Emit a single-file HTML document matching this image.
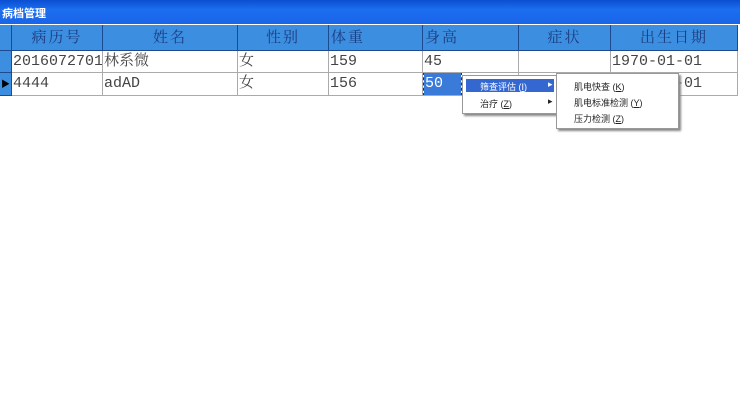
<!DOCTYPE html>
<html><head><style>
body{margin:0;width:740px;height:410px;background:#fff;position:relative;overflow:hidden;font-family:"Liberation Sans","Noto Sans CJK SC",sans-serif}
.t{position:absolute;left:0;top:0;width:740px;height:24px;background:linear-gradient(#0a4fd0,#1c6ef0 40%,#1a64e8);}
.t span{position:absolute;left:2px;top:5px;color:#fff;font-size:11px;font-weight:bold}
.c{position:absolute;box-sizing:border-box;font-size:15px;line-height:22px;white-space:nowrap;overflow:hidden;font-family:"Liberation Mono","Noto Serif CJK SC",monospace}
.h{background:#3b8ee0;color:#1d3c80;border-right:1px solid #1e4a90;border-bottom:1px solid #1e4a90;text-align:center;letter-spacing:2px;font-family:"Liberation Sans","Noto Serif CJK SC",serif}
.d{background:#fff;color:#444;border-right:1px solid #aaa;border-bottom:1px solid #aaa;padding-left:1px}
.m{position:absolute;background:#fff;border:1px solid #999;box-shadow:2px 2px 2px #888;font-size:9px;color:#222}
.m div{position:absolute;white-space:nowrap}
</style></head><body>
<div class="t"><span>病档管理</span></div>
<div class="c h" style="left:0;top:25px;width:12px;height:26px"></div>
<div class="c h" style="left:12px;top:25px;width:91px;height:26px;line-height:26px">病历号</div>
<div class="c h" style="left:103px;top:25px;width:135px;height:26px;line-height:26px">姓名</div>
<div class="c h" style="left:238px;top:25px;width:91px;height:26px;line-height:26px">性别</div>
<div class="c h" style="left:329px;top:25px;width:94px;height:26px;line-height:26px;text-align:left;padding-left:2px">体重</div>
<div class="c h" style="left:423px;top:25px;width:96px;height:26px;line-height:26px;text-align:left;padding-left:2px">身高</div>
<div class="c h" style="left:519px;top:25px;width:92px;height:26px;line-height:26px">症状</div>
<div class="c h" style="left:611px;top:25px;width:127px;height:26px;line-height:26px">出生日期</div>
<div class="c h" style="left:0;top:51px;width:12px;height:22px"></div>
<div class="c h" style="left:0;top:73px;width:12px;height:23px;color:#000;font-size:9px;letter-spacing:0">▶</div>
<div class="c d" style="left:12px;top:51px;width:91px;height:22px">2016072701</div>
<div class="c d" style="left:103px;top:51px;width:135px;height:22px">林系微</div>
<div class="c d" style="left:238px;top:51px;width:91px;height:22px">女</div>
<div class="c d" style="left:329px;top:51px;width:94px;height:22px">159</div>
<div class="c d" style="left:423px;top:51px;width:96px;height:22px">45</div>
<div class="c d" style="left:519px;top:51px;width:92px;height:22px"></div>
<div class="c d" style="left:611px;top:51px;width:127px;height:22px">1970-01-01</div>
<div class="c d" style="left:12px;top:73px;width:91px;height:23px">4444</div>
<div class="c d" style="left:103px;top:73px;width:135px;height:23px">adAD</div>
<div class="c d" style="left:238px;top:73px;width:91px;height:23px">女</div>
<div class="c d" style="left:329px;top:73px;width:94px;height:23px">156</div>
<div class="c d" style="left:423px;top:73px;width:96px;height:23px"><span style="display:inline-block;background:#3a7ad8;color:#fff;width:36px;outline:1px dashed #333;padding-left:1px">50</span></div>
<div class="c d" style="left:519px;top:73px;width:92px;height:23px"></div>
<div class="c d" style="left:611px;top:73px;width:127px;height:23px">1970-01-01</div>
<div class="m" style="left:462px;top:75px;width:94px;height:37px">
<div style="left:3px;top:3px;width:88px;height:13px;background:#3468d0"></div>
<div style="left:17px;top:4px;color:#fff">筛查评估 (<u>I</u>)</div><div style="left:85px;top:3px;color:#fff">▸</div>
<div style="left:17px;top:21px">治疗 (<u>Z</u>)</div><div style="left:85px;top:20px">▸</div>
</div>
<div class="m" style="left:556px;top:73px;width:121px;height:54px">
<div style="left:17px;top:6px">肌电快查 (<u>K</u>)</div>
<div style="left:17px;top:22px">肌电标准检测 (<u>Y</u>)</div>
<div style="left:17px;top:38px">压力检测 (<u>Z</u>)</div>
</div>
</body></html>
